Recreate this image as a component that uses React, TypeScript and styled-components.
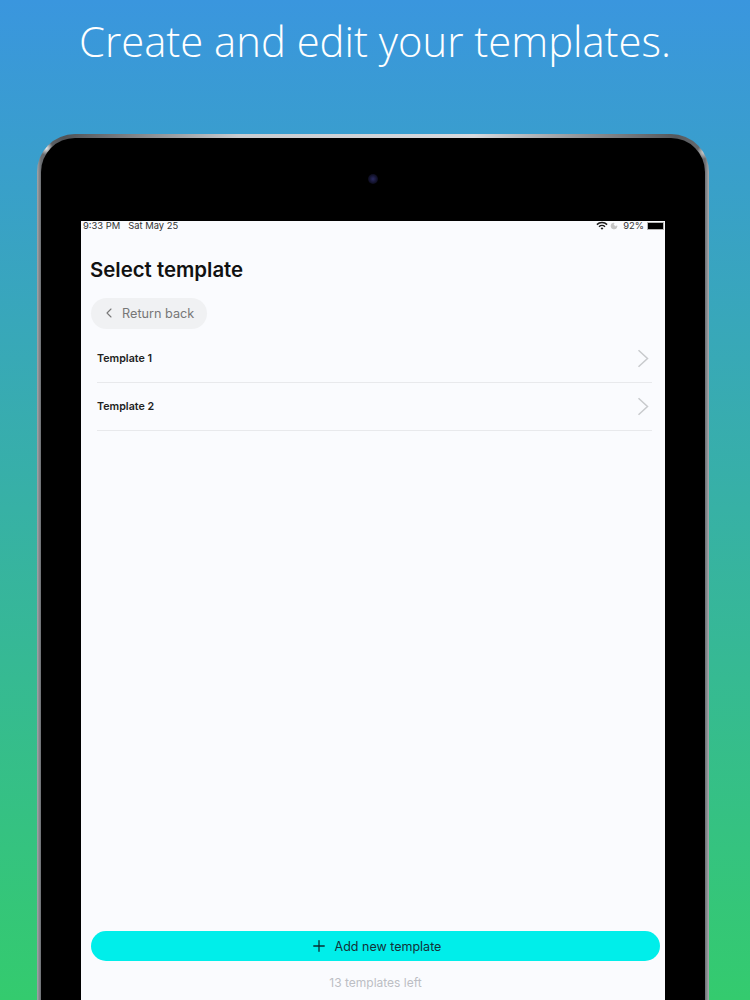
import styled, { createGlobalStyle } from 'styled-components';
import { ChevronLeft, Moon, Plus } from 'lucide-react';

const templates = ['Template 1', 'Template 2'];

function App() {
    return (
        <Page>
            <GlobalStyle />
            <Headline>Create and edit your templates.</Headline>
            <DeviceFrame>
                <Bezel>
                    <Camera />
                    <Screen>
                        <StatusBar>
                            <StatusGroup>
                                <span>9:33 PM</span>
                                <span>Sat May 25</span>
                            </StatusGroup>
                            <StatusGroup $tight>
                                <svg width="12" height="9" viewBox="0 0 12 9">
                                    <path
                                        d="M0.4 3.1a8 8 0 0 1 11.2 0l-1 1.1a6.5 6.5 0 0 0-9.2 0zM2.5 5.2a5 5 0 0 1 7 0l-1 1.1a3.5 3.5 0 0 0-5 0zM4.6 7.3a2 2 0 0 1 2.8 0L6 8.8z"
                                        fill="#1a1a1a"
                                    />
                                </svg>
                                <MoonSlot>
                                    <Moon size={8} fill="#c4c4c4" stroke="#c4c4c4" />
                                </MoonSlot>
                                <span>92%</span>
                                <Battery />
                            </StatusGroup>
                        </StatusBar>
                        <Content>
                            <Title>Select template</Title>
                            <BackPill>
                                <ChevronLeft size={16} strokeWidth={1.6} color="#777" />
                                <span>Return back</span>
                            </BackPill>
                            <TemplateList>
                                {templates.map((name) => (
                                    <TemplateRow key={name}>
                                        <TemplateName>{name}</TemplateName>
                                        <RowArrow width="12" height="19" viewBox="0 0 12 19">
                                            <path
                                                d="M1.5 1.2 L10.5 9.5 L1.5 17.8"
                                                fill="none"
                                                stroke="#c8cacd"
                                                strokeWidth="1.5"
                                            />
                                        </RowArrow>
                                    </TemplateRow>
                                ))}
                            </TemplateList>
                            <Footer>
                                <AddButton>
                                    <Plus size={18} strokeWidth={1.7} color="#0a2a30" />
                                    <span>Add new template</span>
                                </AddButton>
                                <LeftCount>13 templates left</LeftCount>
                            </Footer>
                        </Content>
                    </Screen>
                </Bezel>
            </DeviceFrame>
        </Page>
    );
}

const GlobalStyle = createGlobalStyle`
    html, body {
        margin: 0;
        padding: 0;
    }
`;

const Page = styled.div`
    width: 750px;
    height: 1000px;
    overflow: hidden;
    box-sizing: border-box;
    padding-top: 14px;
    display: flex;
    flex-direction: column;
    background: linear-gradient(180deg, #3a96de 0%, #34cb6e 100%);
    font-family: Inter, 'Liberation Sans', sans-serif;
`;

const Headline = styled.h1`
    margin: 0;
    height: 54px;
    line-height: 54px;
    text-align: center;
    color: #fff;
    font-family: 'Open Sans', sans-serif;
    font-size: 41.8px;
    font-weight: 300;
    white-space: nowrap;
`;

const DeviceFrame = styled.div`
    flex: none;
    width: 672px;
    height: 900px;
    margin: 66px 0 0 37px;
    padding: 4px 4px 0;
    box-sizing: border-box;
    border-radius: 38px 38px 0 0;
    background:
        radial-gradient(circle 7px at 9px 14px, #f2f2f2, transparent),
        radial-gradient(circle 7px at 667px 18px, #d8d8d8, transparent),
        linear-gradient(90deg, #a4a7ab 0%, #6a6d71 0.6%, #505357 4%, #c9ccd0 30%, #d8dade 65%, #55585c 95%, #6a6d71 99.4%, #a8abaf 100%);
`;

const Bezel = styled.div`
    position: relative;
    height: 100%;
    box-sizing: border-box;
    padding: 83px 40px 0;
    border-radius: 34px 34px 0 0;
    background: #000;
`;

const Camera = styled.div`
    position: absolute;
    left: 327px;
    top: 36px;
    width: 10px;
    height: 10px;
    border-radius: 50%;
    background: radial-gradient(circle, #2a2a60 0%, #141430 50%, #000 100%);
`;

const Screen = styled.div`
    height: 779px;
    display: flex;
    flex-direction: column;
    background: #fafbfe;
`;

const StatusBar = styled.div`
    flex: none;
    height: 9px;
    padding: 0 1px 0 2px;
    display: flex;
    align-items: center;
    justify-content: space-between;
    font-size: 9.4px;
    color: #333;
`;

const StatusGroup = styled.div<{ $tight?: boolean }>`
    display: flex;
    align-items: center;
    gap: ${({ $tight }) => ($tight ? '3px' : '8px')};
`;

const MoonSlot = styled.span`
    display: flex;
    margin: 0 2px 0 -1px;
`;

const Battery = styled.div`
    width: 17px;
    height: 8px;
    box-sizing: border-box;
    border: 1px solid #b5b5b5;
    background: #000;
`;

const Content = styled.div`
    flex: 1;
    display: flex;
    flex-direction: column;
    padding: 0 5px 0 10px;
    min-height: 0;
`;

const Title = styled.h2`
    margin: 26px 0 14px -1px;
    height: 28px;
    line-height: 28px;
    color: #111;
    font-size: 20.4px;
    font-weight: 600;
`;

const BackPill = styled.div`
    flex: none;
    align-self: flex-start;
    width: 116px;
    height: 31px;
    box-sizing: border-box;
    padding: 0 0 1px 10px;
    display: flex;
    align-items: center;
    gap: 5px;
    border-radius: 16px;
    background: #f0f1f3;
    color: #777;
    font-size: 12.7px;
`;

const TemplateList = styled.div`
    margin: 6px 8px 0 6px;
`;

const TemplateRow = styled.div`
    height: 48px;
    box-sizing: border-box;
    display: flex;
    align-items: center;
    justify-content: space-between;
    border-bottom: 1px solid #e8e9ec;
`;

const TemplateName = styled.span`
    color: #222;
    font-size: 10.7px;
    font-weight: 600;
`;

const RowArrow = styled.svg`
    margin-right: 3px;
`;

const Footer = styled.div`
    margin-top: auto;
    padding-bottom: 10px;
    display: flex;
    flex-direction: column;
    align-items: center;
`;

const AddButton = styled.div`
    width: 569px;
    height: 30px;
    display: flex;
    align-items: center;
    justify-content: center;
    gap: 7px;
    border-radius: 15px;
    background: #00eeea;
    color: #143238;
    font-size: 12.5px;
`;

const LeftCount = styled.div`
    margin-top: 14px;
    color: #bcbec4;
    font-size: 12px;
    line-height: 15px;
`;

export default App;
